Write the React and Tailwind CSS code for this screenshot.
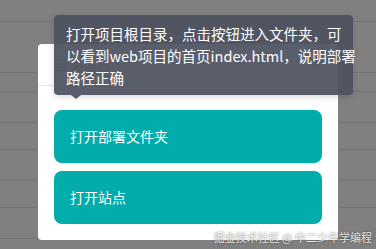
import React from "react";
import { X } from "lucide-react";

const font = { fontFamily: '"Noto Sans CJK SC", "Noto Sans", sans-serif' };

export default function App() {
  const rows = [22, 51, 19, 31, 27, 31, 27, 31];
  return (
    <div className="relative w-[376px] h-[249px] overflow-hidden bg-[#808080]" style={font}>
      {/* page behind the backdrop */}
      <div className="flex flex-col">
        {rows.map((h, i) => (
          <div key={i} className="border-b border-[#747474]" style={{ height: h }} />
        ))}
      </div>

      {/* modal */}
      <div className="absolute left-[38px] top-[44px] w-[300px] bg-white rounded-[4px] flex flex-col">
        <div className="h-[42px] border-b border-[#e8e8e8] flex items-center justify-between pl-[17px] pr-[14px]">
          <span className="text-[14px] text-[#999]">部署信息</span>
          <X size={14} strokeWidth={1.5} className="text-[#999]" />
        </div>
        <div className="flex flex-col gap-2 px-4 pt-6 pb-4">
          <button className="h-[53px] rounded-[8px] bg-[#00adab] text-white text-[14px] text-left pl-4">
            打开部署文件夹
          </button>
          <button className="h-[53px] rounded-[8px] bg-[#00adab] text-white text-[14px] text-left pl-4">
            打开站点
          </button>
        </div>
      </div>

      {/* tooltip */}
      <div className="absolute left-[54px] top-[15px] w-[299px] rounded-[4px] bg-[rgba(78,82,95,0.93)] text-white text-[14.5px] leading-[22px] pl-3 pr-2 pt-[8px] pb-[6px] shadow-[0_2px_6px_rgba(0,0,0,0.15)]">
        <span className="block whitespace-nowrap">打开项目根目录，点击按钮进入文件夹，可</span>
        <span className="block whitespace-nowrap">以看到web项目的首页index.html，说明部署</span>
        <span className="block whitespace-nowrap">路径正确</span>
        <div className="absolute left-[17px] -bottom-[4px] w-0 h-0 border-l-[5px] border-r-[5px] border-t-[4px] border-l-transparent border-r-transparent border-t-[rgba(78,82,95,0.93)]" />
      </div>

      {/* watermark */}
      <div className="absolute right-[4px] bottom-[5px] text-[11px] leading-[14px] text-white/85 [text-shadow:0_0_2px_rgba(0,0,0,0.6)] whitespace-nowrap">
        掘金技术社区 @ 中二少年学编程
      </div>
    </div>
  );
}
